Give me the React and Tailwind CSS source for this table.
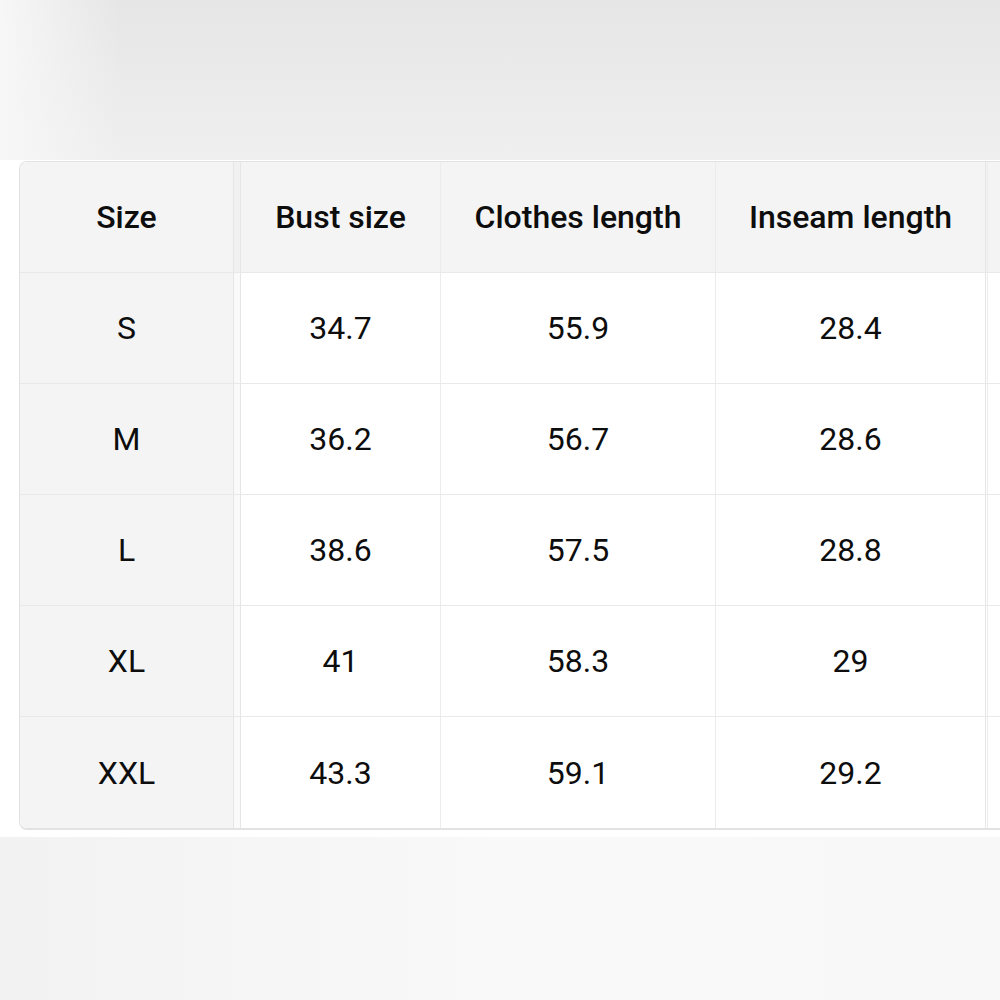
import React from 'react'

const rows = [
  ['S', '34.7', '55.9', '28.4'],
  ['M', '36.2', '56.7', '28.6'],
  ['L', '38.6', '57.5', '28.8'],
  ['XL', '41', '58.3', '29'],
  ['XXL', '43.3', '59.1', '29.2'],
]

// one table row, header or body
function Row({ cells, head, last }) {
  const line = last ? '' : 'border-b border-[#e9e9e9]'
  return (
    <div className={`flex h-[111px] ${line} ${head ? 'bg-[#f4f4f4] font-medium' : 'bg-white'}`}>
      <div className="w-[214px] shrink-0 flex items-center justify-center bg-[#f4f4f4] border-r border-[#e6e6e6]">
        {cells[0]}
      </div>
      <div className={`w-[7px] shrink-0 border-r border-[#e6e6e6] ${head ? 'bg-[#f1f1f1]' : 'bg-[#fafafa]'}`}></div>
      <div className="w-[200px] shrink-0 flex items-center justify-center border-r border-[#ececec]">
        {cells[1]}
      </div>
      <div className="w-[275px] shrink-0 flex items-center justify-center border-r border-[#ececec]">
        {cells[2]}
      </div>
      <div className="w-[270px] shrink-0 flex items-center justify-center border-r border-[#e6e6e6]">
        {cells[3]}
      </div>
      <div className="w-[2px] shrink-0 border-r border-[#ececec]"></div>
    </div>
  )
}

export default function App() {
  return (
    <div className="w-[1000px] h-[1000px] bg-white overflow-hidden text-[#0d0d0d] text-[32px] font-['Roboto',sans-serif]">
      <div className="h-[160px] bg-gradient-to-b from-[#e6e6e6] to-[#efefef]">
        <div className="h-full w-[120px] bg-gradient-to-r from-[#f7f7f7] to-transparent"></div>
      </div>
      <div className="pl-[19px] pt-[1px]">
        <div className="w-[1100px] border border-r-0 border-b-2 border-[#e2e2e2] rounded-l-[8px] overflow-hidden">
          <Row head cells={['Size', 'Bust size', 'Clothes length', 'Inseam length']} />
          {rows.map((r, i) => (
            <Row key={r[0]} cells={r} last={i === rows.length - 1} />
          ))}
        </div>
      </div>
      <div className="mt-[7px] h-[170px] bg-gradient-to-r from-[#f2f2f2] via-[#f9f9f9] to-[#f8f8f8]"></div>
    </div>
  )
}
